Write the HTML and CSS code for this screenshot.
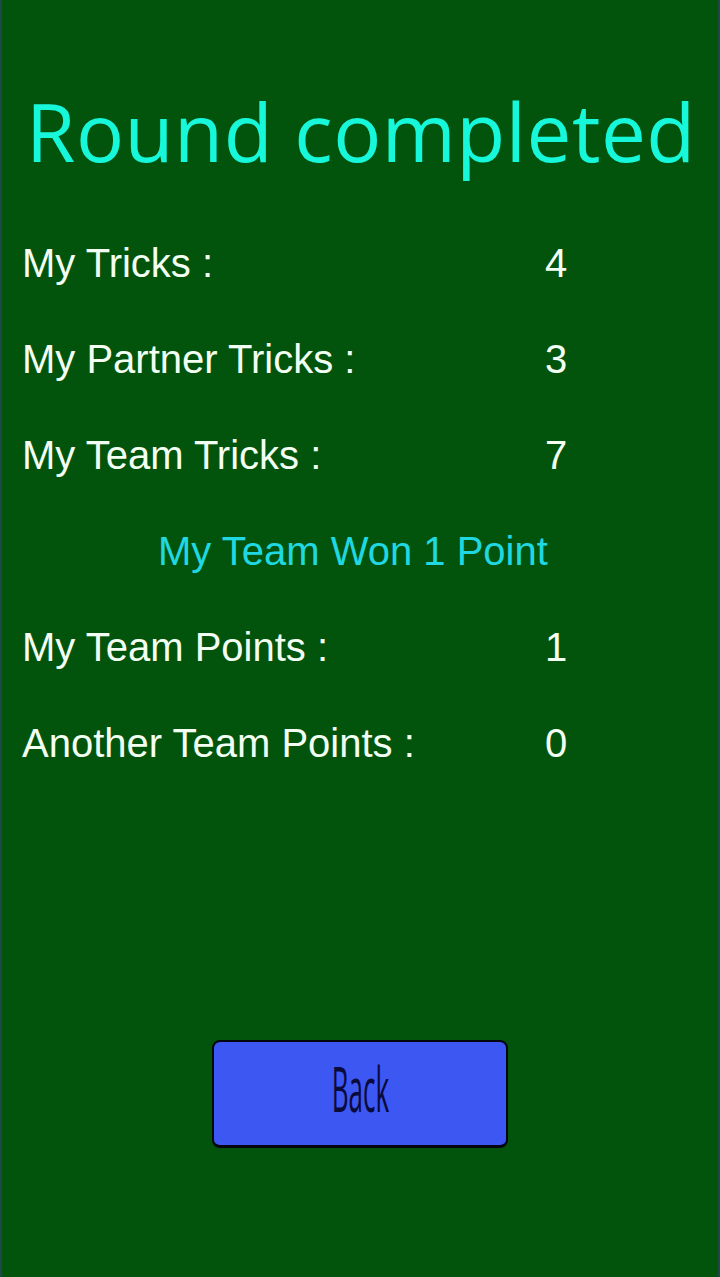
FILE: index.html
```html
<!DOCTYPE html>
<html lang="en">
<head>
  <meta charset="UTF-8">
  <meta name="viewport" content="width=device-width, initial-scale=1.0">
  <title>Round completed</title>
  <link rel="stylesheet" href="styles.css">
</head>
<body>
  <div class="screen">
    <h1 class="title">Round completed</h1>

    <div class="row">
      <span class="label">My Tricks :</span>
      <span class="value">4</span>
    </div>
    <div class="row">
      <span class="label">My Partner Tricks :</span>
      <span class="value">3</span>
    </div>
    <div class="row">
      <span class="label">My Team Tricks :</span>
      <span class="value">7</span>
    </div>

    <div class="result">My Team Won 1 Point</div>

    <div class="row">
      <span class="label">My Team Points :</span>
      <span class="value">1</span>
    </div>
    <div class="row">
      <span class="label">Another Team Points :</span>
      <span class="value">0</span>
    </div>

    <div class="actions">
      <button class="back-btn"><span>Back</span></button>
    </div>
  </div>
</body>
</html>
```

FILE: styles.css
```css
html, body{
  margin: 0;
  padding: 0;
  height: 100%;
}
body{
  background-color: #02540c;
}
.screen{
  box-sizing: border-box;
  height: 1277px;
  border-left: 2px solid #1d4a48;
  border-right: 2px solid #1d4a48;
  padding: 83px 0 0 20px;
  display: flex;
  flex-direction: column;
}
.title{
  margin: 0 0 36px 4px;
  font-family: "Open Sans", sans-serif;
  font-weight: 400;
  font-size: 80px;
  line-height: 96px;
  color: #17f7da;
  letter-spacing: 0.5px;
}
.row{
  display: flex;
  height: 96px;
  align-items: center;
  font-family: "Liberation Sans", Arial, sans-serif;
  font-size: 40px;
  color: #f2fff2;
}
.label{
  width: 523px;
}
.result{
  height: 96px;
  display: flex;
  align-items: center;
  padding-left: 136px;
  font-family: "Liberation Sans", Arial, sans-serif;
  font-size: 40px;
  color: #1fd8e2;
}
.actions{
  display: flex;
  justify-content: center;
  margin-top: 249px;
  padding-right: 20px;
}
.back-btn{
  width: 296px;
  height: 108px;
  background-color: #3d58f2;
  border: 2px solid #050510;
  border-bottom-width: 3px;
  border-radius: 8px;
  cursor: pointer;
  font-family: "Open Sans", sans-serif;
  font-size: 62px;
  font-weight: 500;
  color: #0a0a3c;
  padding: 0 0 12px 0;
}
.back-btn span{
  display: inline-block;
  transform: scaleX(0.42);
}
```
